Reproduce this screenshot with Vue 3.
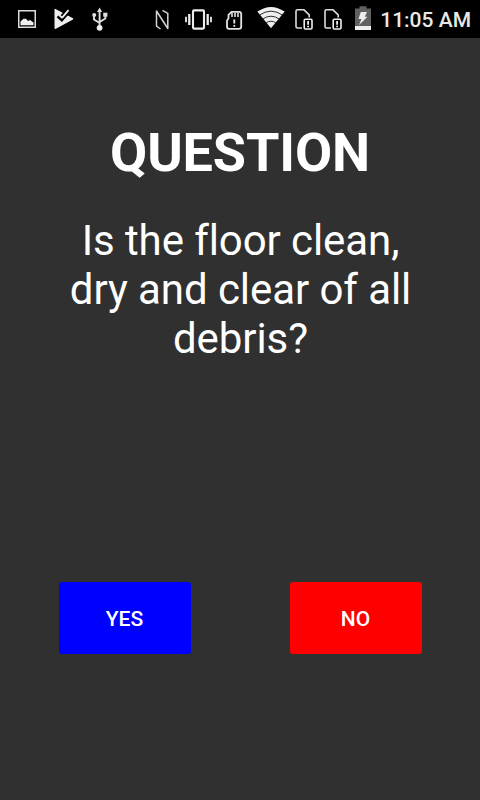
<template>
  <div class="screen">
    <header class="status-bar">
      <div class="notifications">
        <!-- screenshot -->
        <svg width="18" height="38" viewBox="0 0 18 38">
          <rect x="0.75" y="10.75" width="16.5" height="16.5" fill="none" stroke="#dcdcdc" stroke-width="1.5" />
          <path d="M2.5 25.2V21.5L5.5 18.8L8 18.8L10 21L12 20L15.5 22.5V25.2Z" fill="#eee" />
        </svg>
        <!-- play store update -->
        <svg width="20" height="38" viewBox="0 0 20 38">
          <path d="M0.5 9.5Q0.5 8.5 1.5 9L19 18.3Q19.6 19 19 19.6L1.5 29Q0.5 29.2 0.5 28Z" fill="#eee" />
          <path d="M7.5 16L15.5 7" fill="none" stroke="#000" stroke-width="2.4" />
          <path d="M3.5 16.3L7.8 20.3L16 11.3" fill="none" stroke="#000" stroke-width="2.4" />
          <path d="M8 17.8L14.5 10.2" fill="none" stroke="#eee" stroke-width="1.8" />
        </svg>
        <!-- usb -->
        <svg width="16" height="38" viewBox="0 0 16 38">
          <path d="M7.6 11V28M2 16V19.5L7.6 23M13.3 15.5V18.5L7.6 22" fill="none" stroke="#ddd" stroke-width="1.9" />
          <path d="M7.6 7.5L10.2 12H5Z" fill="#ddd" />
          <circle cx="2.2" cy="15" r="2" fill="#ddd" />
          <rect x="11.2" y="12.7" width="4.2" height="4" fill="#ddd" />
          <circle cx="7.6" cy="27.8" r="2.9" fill="#eee" />
        </svg>
      </div>
      <div class="system">
        <!-- nfc -->
        <svg class="nfc" width="15" height="38" viewBox="0 0 15 38">
          <path d="M5.5 29L1.5 26.2V11L12.8 28.5V13.3L7.5 10.3" fill="none" stroke="#d4d4d4" stroke-width="1.5" stroke-linejoin="round" />
        </svg>
        <!-- vibrate -->
        <svg class="vibrate" width="27" height="38" viewBox="0 0 27 38">
          <rect x="8" y="10.4" width="11" height="18.2" rx="1" fill="none" stroke="#eee" stroke-width="2.1" />
          <path d="M1 16.8V22.2M26 16.8V22.2" stroke="#ddd" stroke-width="1.9" />
          <path d="M4.3 14V25M22.7 14V25" stroke="#eee" stroke-width="2.3" />
        </svg>
        <!-- sd card -->
        <svg class="sd" width="17" height="38" viewBox="0 0 17 38">
          <path d="M5.5 11.8H13Q15.2 11.8 15.2 14V26.5Q15.2 28.8 13 28.8H3.2Q1 28.8 1 26.5V20.5L2.5 18.5V14.8Z" fill="none" stroke="#e4e4e4" stroke-width="1.8" stroke-linejoin="round" />
          <path d="M6 13V17M9 13V17M12 13V17" stroke="#ddd" stroke-width="1.6" />
          <path d="M8.3 19.5V23.5M8.3 25V26.8" stroke="#eee" stroke-width="1.8" />
        </svg>
        <!-- wifi -->
        <svg class="wifi" width="28" height="38" viewBox="0 0 28 38">
          <path d="M0.3 11.6Q14 2.2 27.7 11.6L14 28.2Z" fill="#eee" />
          <path d="M2 15.4Q14 6.9 26 15.4M5.3 19.3Q14 13.1 22.7 19.3M8.6 23.2Q14 19.2 19.4 23.2" fill="none" stroke="#181818" stroke-width="0.9" />
        </svg>
        <!-- missing sims -->
        <svg v-for="slot in simSlots" :key="slot" class="sim" width="18" height="38" viewBox="0 0 18 38">
          <path d="M7 28H2.5Q1 28 1 26.5V11.3Q1 9.8 2.5 9.8H9L14.2 14.8V17.5" fill="none" stroke="#ddd" stroke-width="1.6" />
          <rect x="9.2" y="19.2" width="7.8" height="9.8" rx="1.2" fill="#000" stroke="#eee" stroke-width="1.6" />
          <path d="M13.1 21V24.7M13.1 25.7V27.2" stroke="#eee" stroke-width="1.8" />
        </svg>
        <!-- battery -->
        <svg class="battery" width="16" height="38" viewBox="0 0 16 38">
          <path d="M4.5 6.3H11.5V8.5H16V26H0V8.5H4.5Z" fill="#606060" />
          <rect y="26" width="16" height="4" fill="#eee" />
          <path d="M5.8 12H12L9.8 16.7H12.5L4 25L6.5 19H3.5Z" fill="#eee" />
        </svg>
        <span class="clock">11:05 AM</span>
      </div>
    </header>

    <main class="content">
      <h1 class="title">QUESTION</h1>
      <p class="question">Is the floor clean, dry and clear of all debris?</p>
      <div class="answers">
        <button
          v-for="answer in answers"
          :key="answer.label"
          type="button"
          class="answer"
          :class="answer.type"
        >
          {{ answer.label }}
        </button>
      </div>
    </main>
  </div>
</template>

<script setup>
const simSlots = [1, 2];

const answers = [
  { label: 'YES', type: 'yes' },
  { label: 'NO', type: 'no' }
];
</script>

<style>
body {
  margin: 0;
  background-color: #303030;
}
</style>

<style scoped>
.screen {
  display: flex;
  flex-direction: column;
  width: 480px;
  height: 800px;
  overflow: hidden;
  background-color: #303030;
  color: #fff;
  font-family: Roboto, sans-serif;
}

.status-bar {
  display: flex;
  justify-content: space-between;
  height: 38px;
  padding: 0 9px 0 18px;
  background-color: #000;
}

.status-bar svg {
  display: block;
  flex: none;
}

.notifications {
  display: flex;
  gap: 18px;
}

.system {
  display: flex;
}

.vibrate {
  margin-left: 15px;
}

.sd {
  margin-left: 14px;
}

.wifi {
  margin-left: 14px;
}

.sim {
  margin-left: 10px;
}

.sim + .sim {
  margin-left: 11px;
}

.battery {
  margin-left: 13px;
}

.clock {
  width: 91px;
  margin-left: 9px;
  color: #e8e8e8;
  font-size: 21px;
  font-weight: 500;
  line-height: 40px;
  text-align: right;
  white-space: nowrap;
}

.content {
  display: flex;
  flex: 1;
  flex-direction: column;
  align-items: center;
}

.title {
  margin: 83px 0 0;
  font-size: 54px;
  font-weight: 700;
  letter-spacing: -0.15px;
  line-height: 64px;
}

.question {
  width: 364px;
  margin: 31px 0 0;
  padding-left: 1px;
  font-size: 42px;
  font-variant-ligatures: none;
  letter-spacing: -0.08px;
  line-height: 49px;
  text-align: center;
}

.answers {
  display: flex;
  justify-content: space-between;
  width: 363px;
  margin-top: 219px;
}

.answer {
  width: 132px;
  height: 72px;
  padding: 1px 0 0;
  border: none;
  border-radius: 3px;
  color: #fff;
  font-family: inherit;
  font-size: 21px;
  font-weight: 500;
}

.yes {
  background-color: #0000ff;
}

.no {
  background-color: #ff0000;
}
</style>
